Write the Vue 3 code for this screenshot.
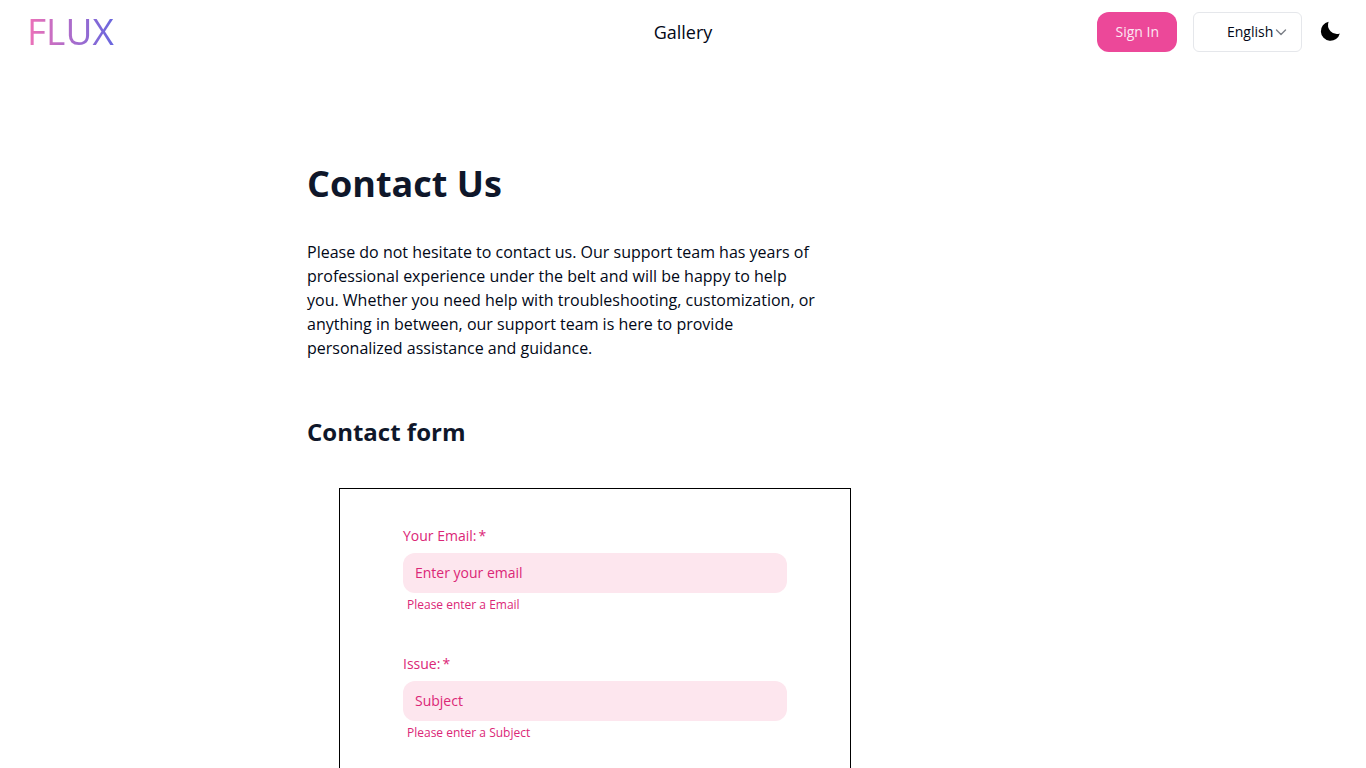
<script setup>
import { ref } from 'vue'

const language = ref('English')
const fields = ref([
  { id: 'email', type: 'email', label: 'Your Email:', placeholder: 'Enter your email', hint: 'Please enter a Email', value: '' },
  { id: 'subject', type: 'text', label: 'Issue:', placeholder: 'Subject', hint: 'Please enter a Subject', value: '' },
])
</script>

<template>
  <div class="page">
    <header class="bar">
      <a class="logo" href="#">FLUX</a>
      <nav class="nav">
        <a class="nav-link" href="#">Gallery</a>
      </nav>
      <div class="actions">
        <button class="sign-in" type="button">Sign In</button>
        <div class="language">
          <select v-model="language" class="language-select" aria-label="Language">
            <option>English</option>
          </select>
          <svg class="chevron" viewBox="0 0 12 12" aria-hidden="true">
            <path d="M1.500 4 6 8.500l4.500-4.500" fill="none" stroke="#7b7f87" stroke-width="1.400" stroke-linecap="round" stroke-linejoin="round" />
          </svg>
        </div>
        <button class="theme" type="button" aria-label="Toggle theme">
          <svg class="moon" viewBox="0 0 20 20" aria-hidden="true">
            <path d="M8.600.800A9.600 9.600 0 1 0 19.800 12.500 9 9 0 0 1 8.600.800Z" fill="#000" />
          </svg>
        </button>
      </div>
    </header>

    <main class="content">
      <h1 class="title">Contact Us</h1>
      <p class="intro">
        Please do not hesitate to contact us. Our support team has years of professional experience under the belt and
        will be happy to help you. Whether you need help with troubleshooting, customization, or anything in between,
        our support team is here to provide personalized assistance and guidance.
      </p>
      <h2 class="subtitle">Contact form</h2>
      <form class="form" novalidate @submit.prevent>
        <div v-for="field in fields" :key="field.id" class="field">
          <label class="label" :for="field.id">{{ field.label }}<span class="star">*</span></label>
          <input
            :id="field.id"
            v-model="field.value"
            class="input"
            :type="field.type"
            :placeholder="field.placeholder"
            :aria-describedby="field.id + '-hint'"
            required
          />
          <p :id="field.id + '-hint'" class="hint">{{ field.hint }}</p>
        </div>
      </form>
    </main>
  </div>
</template>

<style>
body {
  margin: 0;
  background: #fff;
}
</style>

<style scoped>
.page {
  font-family: "Open Sans", "Noto Sans", sans-serif;
  font-size: 16px;
  line-height: 24px;
  color: #020817;
}
.page *,
.page {
  box-sizing: border-box;
}
button,
input,
select {
  font: inherit;
}
.bar {
  display: grid;
  grid-template-columns: 1fr auto 1fr;
  align-items: center;
  height: 64px;
  padding: 0 24px;
}
.logo {
  justify-self: start;
  padding: 0 3px 2px;
  font-size: 37px;
  font-weight: 400;
  line-height: 60px;
  text-decoration: none;
  color: transparent;
  background: linear-gradient(to right, #f472b6, #6366e0);
  background-clip: text;
  -webkit-background-clip: text;
}
.nav-link {
  font-size: 18px;
  line-height: 28px;
  color: inherit;
  text-decoration: none;
}
.actions {
  display: flex;
  justify-content: flex-end;
  align-items: center;
  gap: 16px;
}
.sign-in {
  height: 40px;
  padding: 0 18px;
  border: 0;
  border-radius: 12px;
  background: #ec4899;
  color: #fce7f3;
  font-size: 14px;
}
.language {
  position: relative;
}
.language-select {
  display: block;
  width: 109px;
  height: 40px;
  padding: 0 0 0 33px;
  border: 1px solid #e5e7eb;
  border-radius: 6px;
  appearance: none;
  background: #fff;
  color: inherit;
  font-size: 14px;
}
.chevron {
  position: absolute;
  top: 14px;
  right: 15px;
  width: 12px;
  height: 12px;
  pointer-events: none;
}
.theme {
  display: flex;
  padding: 0 2px 2px;
  border: 0;
  background: none;
}
.moon {
  width: 20px;
  height: 20px;
  overflow: visible;
}
.content {
  max-width: 768px;
  margin: 0 auto;
  padding: 100px 8px 0;
}
.title {
  margin: 0 0 36px;
  font-size: 36px;
  line-height: 40px;
  font-weight: 700;
  color: #0f172a;
}
.intro {
  max-width: 512px;
  margin: 0 0 56px;
}
.subtitle {
  margin: 0 0 40px;
  font-size: 24px;
  line-height: 32px;
  font-weight: 700;
  color: #0f172a;
}
.form {
  max-width: 512px;
  margin-left: 32px;
  padding: 36px 63px;
  border: 1px solid #000;
}
.field {
  margin-bottom: 40px;
}
.label {
  display: block;
  margin-bottom: 6px;
  font-size: 14px;
  line-height: 22px;
  color: #db2777;
}
.star {
  margin-left: 2px;
}
.input {
  display: block;
  width: 100%;
  height: 40px;
  padding: 0 12px 2px;
  border: 0;
  border-radius: 12px;
  background: #fde6ee;
  color: #db2777;
  font-size: 14px;
}
.input::placeholder {
  color: #db2777;
  opacity: 1;
}
.hint {
  margin: 4px 0 0;
  padding-left: 4px;
  font-size: 12px;
  line-height: 16px;
  color: #db2777;
}
</style>
